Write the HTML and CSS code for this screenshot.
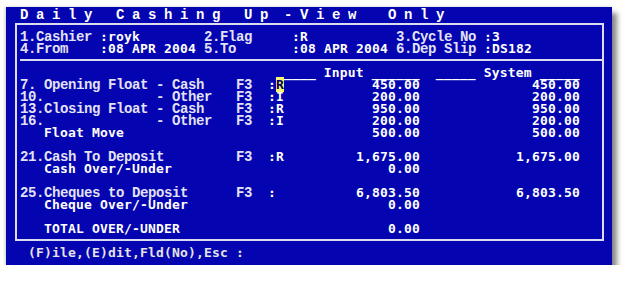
FILE: index.html
```html
<!DOCTYPE html>
<html lang="en">
<head>
    <meta charset="UTF-8">
    <title>Daily Cashing Up - View Only</title>
    <link rel="stylesheet" href="styles.css">
</head>
<body>
    <div class="screen">
        <div class="title">D a i l y   C a s h i n g   U p  - V i e w    O n l y</div>
        <div class="box">
            <div class="head">
                <span class="lb">1.Cashier</span><span>:royk</span>
                <span class="lb">2.Flag</span><span>:R</span>
                <span class="lb">3.Cycle No</span><span>:3</span>
                <span class="lb">4.From</span><span>:08 APR 2004</span>
                <span class="lb">5.To</span><span>:08 APR 2004</span>
                <span class="lb">6.Dep Slip</span><span>:DS182</span>
            </div>
            <div class="body">
                <div class="cols">                                _____ Input ______  _____ System _____</div>
                <div class="row">
                    <span class="lb">7. Opening Float - Cash</span><span class="lb">F3</span><span>:<b class="cur">R</b></span><span class="amt">450.00</span><span class="amt">450.00</span>
                </div>
                <div class="row">
                    <span class="lb">10.              - Other</span><span class="lb">F3</span><span>:I</span><span class="amt">200.00</span><span class="amt">200.00</span>
                </div>
                <div class="row">
                    <span class="lb">13.Closing Float - Cash</span><span class="lb">F3</span><span>:R</span><span class="amt">950.00</span><span class="amt">950.00</span>
                </div>
                <div class="row">
                    <span class="lb">16.              - Other</span><span class="lb">F3</span><span>:I</span><span class="amt">200.00</span><span class="amt">200.00</span>
                </div>
                <div class="row">
                    <span>   Float Move</span><span></span><span></span><span class="amt">500.00</span><span class="amt">500.00</span>
                </div>
                <div class="blank"></div>
                <div class="row">
                    <span class="lb">21.Cash To Deposit</span><span class="lb">F3</span><span>:R</span><span class="amt">1,675.00</span><span class="amt">1,675.00</span>
                </div>
                <div class="row">
                    <span>   Cash Over/-Under</span><span></span><span></span><span class="amt">0.00</span><span></span>
                </div>
                <div class="blank"></div>
                <div class="row">
                    <span class="lb">25.Cheques to Deposit</span><span class="lb">F3</span><span>:</span><span class="amt">6,803.50</span><span class="amt">6,803.50</span>
                </div>
                <div class="row">
                    <span>   Cheque Over/-Under</span><span></span><span></span><span class="amt">0.00</span><span></span>
                </div>
                <div class="blank"></div>
                <div class="row">
                    <span>   TOTAL OVER/-UNDER</span><span></span><span></span><span class="amt">0.00</span><span></span>
                </div>
            </div>
        </div>
        <div class="footer"> (F)ile,(E)dit,Fld(No),Esc :</div>
    </div>
</body>
</html>
```

FILE: styles.css
```css
body {
    margin:0; background:#fff;
}
.screen {
    width:592px; margin:7px 0 0 6px;
    padding:0 0 6px 14px;
    background:#0404b0; color:#fff;
    font:bold 13px/12px "DejaVu Sans Mono", monospace;
    letter-spacing:0.17px;
    box-shadow:5px 6px 5px rgba(40,40,40,0.55), -1px 0 3px rgba(0,0,0,0.2);
}
/* spaces inside the texts keep the columns of the text screen */
.title, .cols, .footer, .head span, .row span {
    white-space:pre;
}
.lb {
    font:bold 14px/12px "Liberation Mono", monospace;
    letter-spacing:-0.4px;
    color:#e2e2f4;
}
.title {
    height:12px; padding-top:2px;
    font:bold 14px/12px "Liberation Mono", monospace;
    letter-spacing:-0.4px;
}
.box {
    width:582px; margin:2px 0 0 -5px;
    padding-left:3px;
    border:2px solid #dcdcf0;
}
.head {
    display:grid;
    grid-template-columns:80px 104px 88px 104px 88px auto;
    padding:6px 0 4px;
    border-bottom:2px solid #dcdcf0;
}
.body {
    padding:6px 0 4px;
}
.cols {height:12px;}
.row {
    display:grid;
    grid-template-columns:216px 32px 16px 136px 160px;
    height:12px;
}
.amt {text-align:right;}
.cur {
    background:#f6f670; color:#000060;
    font-weight:bold;
}
.blank {height:12px;}
.footer {
    height:12px; margin-top:6px;
    color:#e4e4e4;
}
```
